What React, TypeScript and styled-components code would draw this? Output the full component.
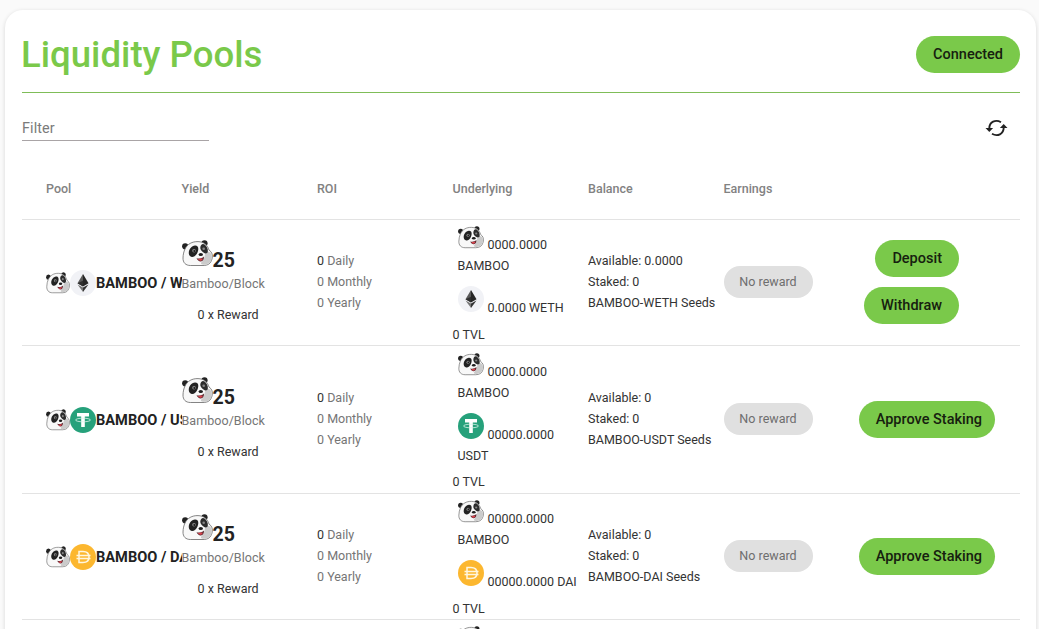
import React from "react";
import styled, { createGlobalStyle } from "styled-components";

const Global = createGlobalStyle`
  * { box-sizing: border-box; }
  html, body { margin: 0; height: 629px; overflow: hidden; background: #fafafa; }
  body { font-family: Roboto, "Liberation Sans", sans-serif; font-size: 12.5px; color: #333; }
`;

const Page = styled.div`
  height: 629px;
  padding: 10px 3px 0 5px;
  overflow: hidden;
`;
const Card = styled.main`
  height: 680px;
  padding: 0 16px 0 17px;
  background: #fff;
  border-radius: 18px;
  box-shadow: 0 1px 4px rgba(0, 0, 0, 0.14);
`;
const Header = styled.header`
  display: flex;
  align-items: center;
  justify-content: space-between;
  height: 83px;
  padding-top: 6px;
  border-bottom: 1px solid #7fbd58;
`;
const Title = styled.h1`
  margin: 1px 0 0 -1px;
  font-size: 36.6px;
  line-height: 44px;
  font-weight: 500;
  color: #7ac94a;
`;
const Button = styled.button<{ $wide?: boolean }>`
  height: 37px;
  padding: ${(p) => (p.$wide ? "0 13px 0 17px" : "0 17px")};
  border: 0;
  border-radius: 19px;
  background: #7ac94a;
  color: #16200f;
  font: 500 14.5px/37px Roboto, sans-serif;
  white-space: nowrap;
`;
const Tools = styled.div`
  display: flex;
  justify-content: space-between;
  height: 65px;
  padding: 23px 12px 0 0;
`;
const Filter = styled.input`
  width: 187px;
  height: 25px;
  padding: 0;
  border: 0;
  border-bottom: 1px solid #a9a4a6;
  background: none;
  outline: 0;
  font: 400 14.4px/24px Roboto, sans-serif;
  letter-spacing: 0.1px;
  &::placeholder { color: #7b7b7b; opacity: 1; }
`;
const RefreshIcon = styled.svg`
  width: 23px;
  height: 20px;
  margin-top: 2px;
`;
const Row = styled.div<{ $h: number }>`
  display: grid;
  grid-template-columns: repeat(6, 135.5px) 1fr;
  align-items: center;
  height: ${(p) => p.$h}px;
  padding-left: 24px;
  border-bottom: 1px solid #e3e3e3;
`;
const HeadRow = styled(Row)`
  padding-bottom: 1px;
`;
const HeadCell = styled.div`
  font-size: 12.5px;
  font-weight: 500;
  color: #828282;
`;
const PoolCell = styled.div`
  display: flex;
  align-items: center;
  overflow: hidden;
  white-space: nowrap;
`;
const PoolName = styled.b`
  font-size: 14.6px;
  font-weight: 700;
  color: #222;
`;
const Art = styled.svg<{ $w: number; $h: number }>`
  display: block;
  flex: none;
  width: ${(p) => p.$w}px;
  height: ${(p) => p.$h}px;
`;
const YieldCell = styled.div`
  padding-bottom: 3px;
  white-space: nowrap;
`;
const YieldTop = styled.div`
  display: flex;
  align-items: flex-end;
  height: 30px;
`;
const Amount = styled.b`
  font-size: 19.5px;
  line-height: 20px;
  color: #222;
  margin-bottom: -4px;
`;
const Muted = styled.div`
  line-height: 21px;
  color: #757575;
`;
const BlockLabel = styled(Muted)`
  margin-top: 6px;
  letter-spacing: 0.05px;
`;
const Reward = styled.div`
  padding: 10px 0 0 16px;
  line-height: 21px;
`;
const Dark = styled.span`
  color: #333;
`;
const Roi = styled.div`
  padding-bottom: 3px;
`;
const Underlying = styled.div<{ $tall?: boolean }>`
  align-self: start;
  padding-top: ${(p) => (p.$tall ? 4 : 3)}px;
  white-space: nowrap;
`;
const Token = styled.div`
  padding-left: 5px;
  margin-bottom: 10.5px;
  line-height: 21px;
`;
const TokenTop = styled.div`
  display: flex;
  align-items: flex-end;
  gap: 4px;
  height: 31.5px;
  svg { margin-bottom: 6px; }
`;
const Tvl = styled.div<{ $tall?: boolean }>`
  margin-top: ${(p) => (p.$tall ? -5 : -4)}px;
  line-height: 21px;
`;
const Balance = styled.div`
  padding-bottom: 3px;
  line-height: 21px;
  white-space: nowrap;
`;
const Chip = styled.span`
  display: block;
  width: 89px;
  height: 32px;
  margin-bottom: 1px;
  text-align: center;
  border-radius: 16px;
  background: #e0e0e0;
  color: #6e6e6e;
  line-height: 32px;
`;
const Actions = styled.div<{ $stack?: boolean }>`
  display: flex;
  flex-direction: column;
  align-items: flex-end;
  gap: 10px;
  width: ${(p) => (p.$stack ? 100 : 136)}px;
  padding-bottom: 1px;
`;

function Panda({ w, h }: { w: number; h: number }) {
  return (
    <Art $w={w} $h={h} viewBox="0 0 31 27" preserveAspectRatio="none">
      <circle cx="3.200" cy="6.300" r="3.100" fill="#222" />
      <circle cx="22.500" cy="3.300" r="3.100" fill="#222" />
      <path d="M3 9C5.500 4 10 1.500 16 1.600c6 .2 9.500 3.400 11 8.400 3 2 4 5 3 9-1.200 4.500-4 6.500-9 6.500H8.500C3.500 25.500.9 22.500 1 18c.1-3.500.8-6.500 2-9Z" fill="#f8f8f8" stroke="#666" strokeWidth=".8" />
      <path d="M24 12c3-1 5.500 1 5.800 4.200.4 5-2.800 8.300-7.800 8.500-3 0-4-1.300-2-3 2.600-2.200 2.300-6.500 4-9.700Z" fill="#cbcbcb" />
      <path d="M6.800 13.500C6.500 9.500 9.500 5.800 13 5.500c3.400-.2 4 3.300 2.600 6.700-1.300 3-3.600 5-5.800 4.700-1.700-.2-2.800-1.600-3-3.400Z" fill="#222" />
      <path d="M18.300 7.500c.3-3 2.300-4.400 4.300-3 2.200 1.500 3.700 4.500 3.200 7.300-.4 2-2.600 2.200-4.300.8-1.800-1.300-3.400-3-3.200-5.100Z" fill="#2c2c2c" />
      <circle cx="12" cy="10.800" r="1.800" fill="#8b8b8b" />
      <circle cx="12.300" cy="11" r="1" fill="#1b1b1b" />
      <circle cx="21.700" cy="8.800" r="1.300" fill="#858585" />
      <ellipse cx="18.800" cy="14.400" rx="2.200" ry="1.500" fill="#1d1d1d" />
      <path d="M14.500 18.200c2.800.7 5.300.2 7.500-1.700.1 2.800-1 4.800-3.200 4.900-1.700.1-3.400-1.300-4.300-3.200Z" fill="#5a2a30" />
      <path d="M16 19.300c1.500-.7 3-.9 4.800-.4-.8 2-3.200 2.700-4.800.4Z" fill="#d9434e" />
    </Art>
  );
}

type CoinKind = "eth" | "usdt" | "dai";

function Coin({ kind }: { kind: CoinKind }) {
  return (
    <Art $w={26} $h={26} viewBox="0 0 26 26">
      {kind === "eth" && (
        <>
          <circle cx="13" cy="13" r="13" fill="#f1f2f6" />
          <path d="M13 4 7.500 13.300 13 16.500Z" fill="#5a5a5a" />
          <path d="M13 4l5.500 9.300-5.500 3.200Z" fill="#262626" />
          <path d="M7.500 14.400 13 17.600V22Z" fill="#777" />
          <path d="M18.500 14.400 13 17.600V22Z" fill="#333" />
          <path d="M7.500 13.300 13 10.800v5.700Z" fill="#2f2f2f" />
        </>
      )}
      {kind === "usdt" && (
        <>
          <circle cx="13" cy="13" r="13" fill="#26a17b" />
          <path d="M7 6h12v3.400h-4.200V20h-3.600V9.400H7Z" fill="#fff" />
          <ellipse cx="13" cy="13" rx="7.500" ry="1.800" fill="none" stroke="#d9f3ea" strokeWidth=".8" />
        </>
      )}
      {kind === "dai" && (
        <>
          <circle cx="13" cy="13" r="13" fill="#fcb72f" />
          <path d="M9 7.500h4c3.500 0 6 2 6 5.500s-2.500 5.500-6 5.500H9ZM6.500 11.500h14M6.500 14.500h14" fill="none" stroke="#fff6df" strokeWidth="1.500" />
        </>
      )}
    </Art>
  );
}

interface Pool {
  kind: CoinKind;
  symbol: string;
  height: number;
  bamboo: string;
  amount: string;
  wrap?: boolean;
  available: string;
  staked?: boolean;
}

const pools: Pool[] = [
  { kind: "eth", symbol: "WETH", height: 126, bamboo: "0000.0000", amount: "0.0000", available: "0.0000", staked: true },
  { kind: "usdt", symbol: "USDT", height: 148, bamboo: "0000.0000", amount: "00000.0000", wrap: true, available: "0" },
  { kind: "dai", symbol: "DAI", height: 126, bamboo: "00000.0000", amount: "00000.0000", available: "0" },
];

function PoolRow({ p }: { p: Pool }) {
  return (
    <Row $h={p.height}>
      <PoolCell>
        <Panda w={24} h={22} />
        <Coin kind={p.kind} />
        <PoolName>BAMBOO / {p.symbol}</PoolName>
      </PoolCell>
      <YieldCell>
        <YieldTop>
          <Panda w={31} h={27} />
          <Amount>25</Amount>
        </YieldTop>
        <BlockLabel>Bamboo/Block</BlockLabel>
        <Reward>0 x Reward</Reward>
      </YieldCell>
      <Roi>
        <Muted><Dark>0</Dark> Daily</Muted>
        <Muted>0 Monthly</Muted>
        <Muted>0 Yearly</Muted>
      </Roi>
      <Underlying $tall={p.wrap}>
        <Token>
          <TokenTop><Panda w={26} h={23} /><span>{p.bamboo}</span></TokenTop>
          BAMBOO
        </Token>
        <Token>
          <TokenTop><Coin kind={p.kind} /><span>{p.amount}{p.wrap ? "" : " " + p.symbol}</span></TokenTop>
          {p.wrap && p.symbol}
        </Token>
        <Tvl $tall={p.wrap}>0 TVL</Tvl>
      </Underlying>
      <Balance>
        <div>Available: {p.available}</div>
        <div>Staked: 0</div>
        <div>BAMBOO-{p.symbol} Seeds</div>
      </Balance>
      <Chip>No reward</Chip>
      <Actions $stack={p.staked}>
        {p.staked ? (
          <>
            <Button>Deposit</Button>
            <Button>Withdraw</Button>
          </>
        ) : (
          <Button $wide>Approve Staking</Button>
        )}
      </Actions>
    </Row>
  );
}

export default function App() {
  return (
    <Page>
      <Global />
      <Card>
        <Header>
          <Title>Liquidity Pools</Title>
          <Button>Connected</Button>
        </Header>
        <Tools>
          <Filter placeholder="Filter" />
          <RefreshIcon viewBox="0 0 23 20">
            <path d="M4.300 10.500C4.300 4 10.500 1 16 4.200M18.700 9.500C18.700 16 12.500 19 7 15.800" fill="none" stroke="#222" strokeWidth="1.900" />
            <path d="M.5 10h7.600l-3.800 4ZM14.900 10h7.600l-3.800-4Z" fill="#222" />
          </RefreshIcon>
        </Tools>
        <HeadRow $h={62}>
          {["Pool", "Yield", "ROI", "Underlying", "Balance", "Earnings"].map((t) => (
            <HeadCell key={t}>{t}</HeadCell>
          ))}
        </HeadRow>
        {pools.map((p) => <PoolRow key={p.kind} p={p} />)}
        <Row $h={126}>
          <div /><div /><div />
          <Underlying>
            <Token><TokenTop><Panda w={26} h={23} /></TokenTop></Token>
          </Underlying>
        </Row>
      </Card>
    </Page>
  );
}
